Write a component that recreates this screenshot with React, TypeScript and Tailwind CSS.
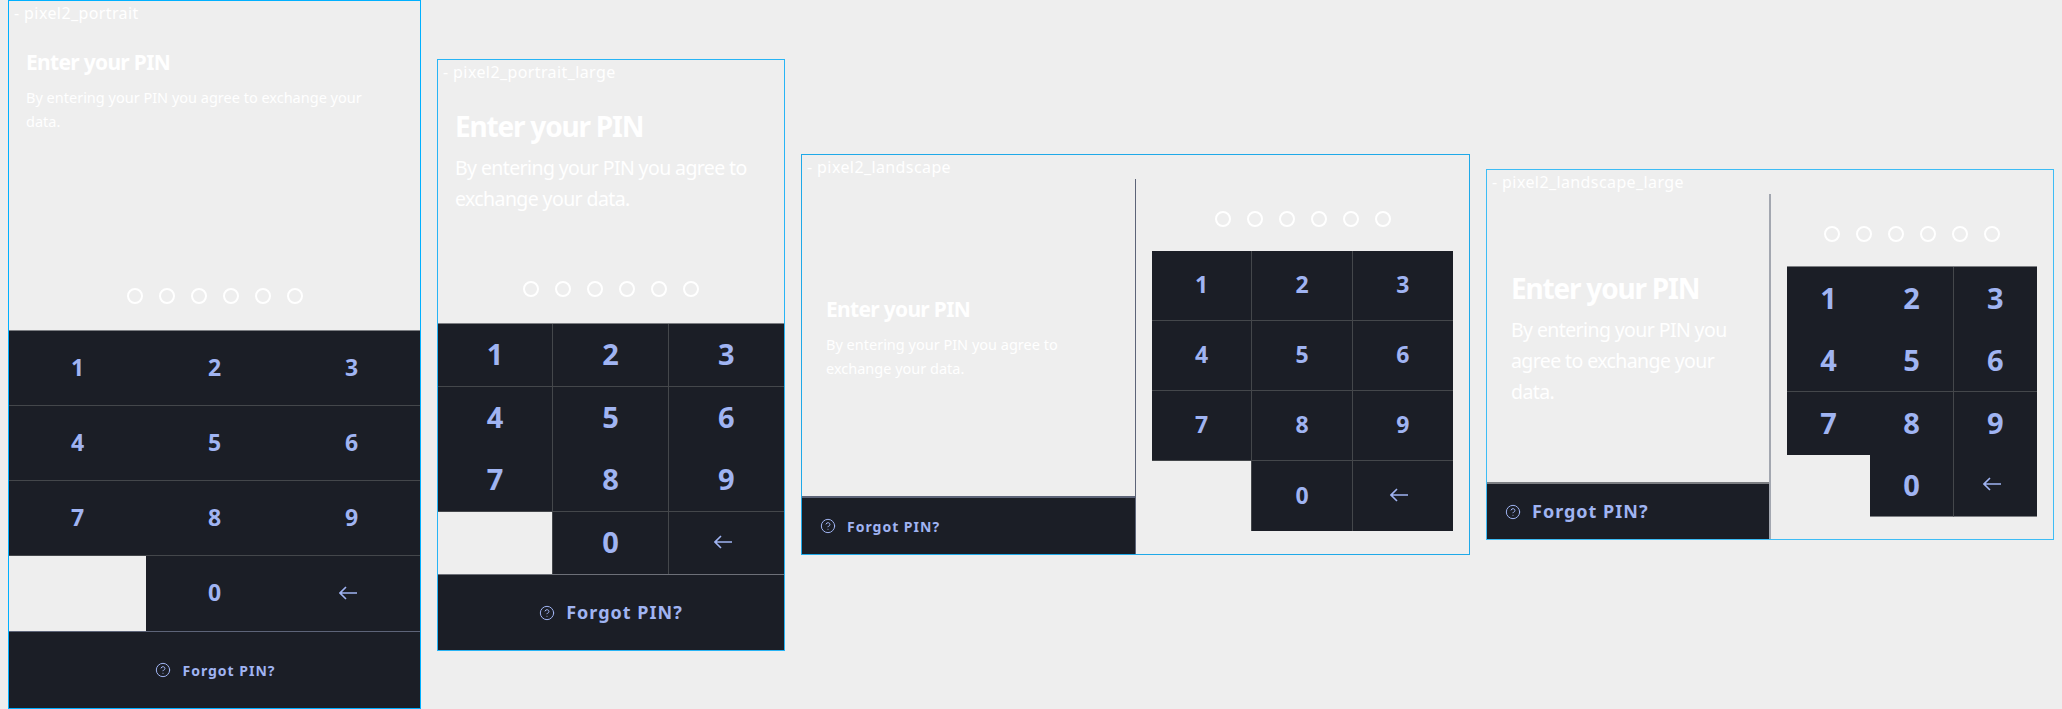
import { CircleHelp } from "lucide-react";
import clsx from "clsx";

const KEYS = ["1", "2", "3", "4", "5", "6", "7", "8", "9", "", "0", "back"];

function BackArrow() {
  return (
    <svg width="18" height="14" viewBox="0 0 18 14" fill="none" stroke="currentColor" strokeWidth="1.6" className="mr-[7px]">
      <path d="M7 1 L1 7 L7 13 M1 7 H18" />
    </svg>
  );
}

type KeypadProps = {
  className: string;
  digit: string;
  vLines: [boolean, boolean];
  hLines: [boolean, boolean, boolean];
  lastLine?: boolean;
};

function Keypad({ className, digit, vLines, hLines, lastLine }: KeypadProps) {
  return (
    <div className={clsx("grid grid-cols-3", className)}>
      {KEYS.map((k, i) => {
        const col = i % 3;
        const row = Math.floor(i / 3);
        return (
          <div
            key={i}
            className={clsx(
              "flex items-center justify-center border-[#44474b] pb-[2px] font-bold leading-none text-[#a0b4f2]",
              digit,
              k !== "" && "bg-[#1b1e26]",
              k !== "" && col < 2 && vLines[col] && "border-r",
              k === "" && vLines[0] && "border-r",
              row < 3 && hLines[row] && "border-b",
              row === 3 && k !== "" && lastLine && "border-b border-b-[#7c7e82]"
            )}
          >
            {k === "back" ? <BackArrow /> : k}
          </div>
        );
      })}
    </div>
  );
}

function Dots({ className }: { className?: string }) {
  return (
    <div className={clsx("flex justify-center gap-4", className)}>
      {[0, 1, 2, 3, 4, 5].map((d) => (
        <span key={d} className="h-4 w-4 rounded-full border-2 border-white" />
      ))}
    </div>
  );
}

function Forgot({ className, text }: { className: string; text: string }) {
  return (
    <div className={clsx("flex shrink-0 items-center bg-[#1b1e26] text-[#a0b4f2]", className)}>
      <CircleHelp size={16} strokeWidth={1.5} className="shrink-0" />
      <span className={clsx("font-bold", text)}>Forgot PIN?</span>
    </div>
  );
}

function Label({ text }: { text: string }) {
  return (
    <div className="h-[24px] shrink-0 truncate whitespace-pre pl-[5px] text-[16px] leading-[24px] tracking-[0.4px] text-white">
      {"- " + text}
    </div>
  );
}

function Intro({ large, className }: { large?: boolean; className?: string }) {
  return (
    <div className={className}>
      <div
        className={clsx(
          "font-bold text-white",
          large ? "text-[28px] leading-[40px] tracking-[-1.2px]" : "text-[21px] leading-[30px] tracking-[-0.7px]"
        )}
      >
        Enter your PIN
      </div>
      <div
        className={clsx(
          "text-white",
          large ? "mt-[6px] text-[19.5px] leading-[31px] tracking-[-0.6px]" : "mt-[8px] text-[14.5px] leading-[24px]"
        )}
      >
        By entering your PIN you agree to exchange your data.
      </div>
    </div>
  );
}

export default function App() {
  return (
    <div className="flex h-[709px] w-[2062px] items-start overflow-hidden bg-[#eeeeee] font-['Noto_Sans',sans-serif]">
      {/* portrait */}
      <div className="ml-[8px] flex h-[709px] w-[413px] shrink-0 flex-col border border-[#00b0ff]">
        <Label text="pixel2_portrait" />
        <Intro className="pl-[17px] pr-[40px] pt-[22px]" />
        <div className="flex-1" />
        <Dots className="mb-[26px]" />
        <Keypad
          className="grid-rows-[repeat(4,75px)] border-t border-[#7c7e82]"
          digit="text-[23px]"
          vLines={[false, false]}
          hLines={[true, true, true]}
        />
        <div className="border-t border-[#5d6478]" />
        <Forgot className="h-[76px] justify-center gap-[11px] pl-[2px]" text="text-[14px] tracking-[1px]" />
      </div>

      {/* portrait large */}
      <div className="ml-[16px] mt-[59px] flex h-[592px] w-[348px] shrink-0 flex-col border border-[#27b4f5]">
        <Label text="pixel2_portrait_large" />
        <Intro large className="px-[17px] pt-[22px]" />
        <div className="flex-1" />
        <Dots className="mb-[26px]" />
        <Keypad
          className="grid-rows-[repeat(4,62.5px)] border-t border-[#7c7e82]"
          digit="text-[29px]"
          vLines={[true, true]}
          hLines={[true, false, true]}
        />
        <div className="border-t border-[#6d7078]" />
        <Forgot className="h-[75px] justify-center gap-[11px]" text="text-[18px] tracking-[1px]" />
      </div>

      {/* landscape */}
      <div className="ml-[16px] mt-[154px] flex h-[401px] w-[669px] shrink-0 flex-col border border-[#1fa9e8]">
        <Label text="pixel2_landscape" />
        <div className="flex flex-1">
          <div className="flex w-[334px] shrink-0 flex-col border-r border-[#5d6478]">
            <div className="flex flex-1 items-center px-[24px] pb-[2px]">
              <Intro />
            </div>
            <div className="border-t-2 border-[#5d6478]" />
            <Forgot className="h-[56px] gap-[11px] pl-[18px]" text="text-[14px] tracking-[1px]" />
          </div>
          <div className="flex-1 px-4 pt-[32px]">
            <Dots className="mb-[24px]" />
            <Keypad
              className="grid-rows-[repeat(4,70px)]"
              digit="text-[23px]"
              vLines={[true, true]}
              hLines={[true, true, true]}
            />
          </div>
        </div>
      </div>

      {/* landscape large */}
      <div className="ml-[16px] mt-[169px] flex h-[371px] w-[568px] shrink-0 flex-col border border-[#3dbcf5]">
        <Label text="pixel2_landscape_large" />
        <div className="flex flex-1">
          <div className="flex w-[284px] shrink-0 flex-col border-r-2 border-[#a3a7b0]">
            <div className="flex flex-1 items-center px-[24px] pb-[2px]">
              <Intro large />
            </div>
            <div className="border-t-2 border-[#7c7e82]" />
            <Forgot className="h-[55px] gap-[11px] pl-[18px]" text="text-[18px] tracking-[1px]" />
          </div>
          <div className="flex-1 px-4 pt-[32px]">
            <Dots className="mb-[24px]" />
            <Keypad
              className="grid-rows-[repeat(4,62.5px)] border-t border-[#7c7e82]"
              digit="text-[29px]"
              vLines={[false, true]}
              hLines={[false, true, false]}
              lastLine
            />
          </div>
        </div>
      </div>
    </div>
  );
}
